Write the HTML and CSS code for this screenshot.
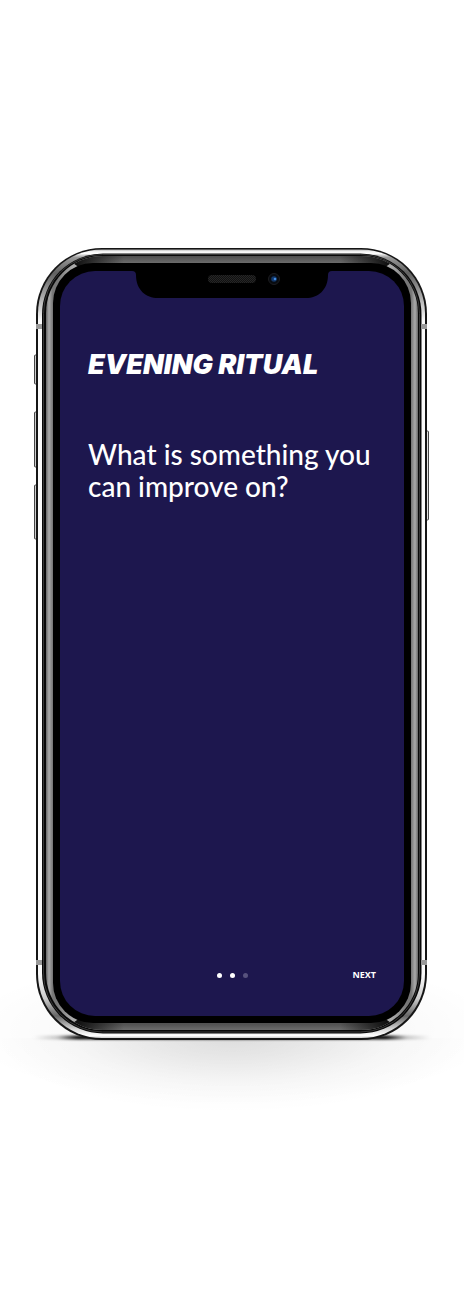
FILE: index.html
```html
<!DOCTYPE html>
<html lang="en">
<head>
<meta charset="utf-8">
<meta name="viewport" content="width=device-width, initial-scale=1">
<title>Evening Ritual</title>
<link rel="stylesheet" href="styles.css">
</head>
<body>
<div class="stage">
<div class="phone">
  <svg class="phone-frame" viewBox="36 248 392 792" aria-hidden="true">
    <defs>
      <linearGradient id="steel" x1="0" y1="0" x2="0" y2="1">
        <stop offset="0" stop-color="#aaa"/><stop offset=".002" stop-color="#eee"/><stop offset=".005" stop-color="#fff"/>
        <stop offset=".01" stop-color="#999"/><stop offset=".03" stop-color="#606060"/><stop offset=".06" stop-color="#aaa"/><stop offset=".09" stop-color="#fafafa"/>
        <stop offset=".92" stop-color="#fafafa"/><stop offset=".95" stop-color="#ccc"/><stop offset=".972" stop-color="#666"/><stop offset=".99" stop-color="#ddd"/><stop offset=".997" stop-color="#fff"/><stop offset="1" stop-color="#ccc"/>
      </linearGradient>
      <linearGradient id="bezel" x1="0" y1="0" x2="1" y2="0">
        <stop offset="0" stop-color="#666"/><stop offset=".008" stop-color="#aaa"/><stop offset=".018" stop-color="#777"/>
        <stop offset=".03" stop-color="#777"/><stop offset=".07" stop-color="#aaa"/><stop offset=".93" stop-color="#aaa"/><stop offset=".97" stop-color="#777"/>
        <stop offset=".982" stop-color="#777"/><stop offset=".992" stop-color="#aaa"/><stop offset="1" stop-color="#666"/>
      </linearGradient>
      <linearGradient id="rim-top" x1="0" y1="0" x2="0" y2="1">
        <stop offset="0" stop-color="#444"/><stop offset=".5" stop-color="#6c6c6c"/><stop offset="1" stop-color="#444"/>
      </linearGradient>
      <linearGradient id="rim-low" x1="0" y1="0" x2="0" y2="1">
        <stop offset="0" stop-color="#444"/><stop offset=".6" stop-color="#555"/><stop offset="1" stop-color="#777"/>
      </linearGradient>
      <linearGradient id="rim-ends" x1="0" y1="0" x2="1" y2="0">
        <stop offset="0" stop-color="#0a0a0a"/><stop offset=".16" stop-color="#0a0a0a" stop-opacity="0"/><stop offset=".84" stop-color="#0a0a0a" stop-opacity="0"/><stop offset="1" stop-color="#0a0a0a"/>
      </linearGradient>
      <linearGradient id="key" x1="0" y1="0" x2="1" y2="0">
        <stop offset="0" stop-color="#888"/><stop offset=".5" stop-color="#eee"/><stop offset="1" stop-color="#ccc"/>
      </linearGradient>
      <radialGradient id="floor"><stop offset="0" stop-color="#000" stop-opacity=".14"/><stop offset=".3" stop-color="#000" stop-opacity=".095"/><stop offset=".65" stop-color="#000" stop-opacity=".035"/><stop offset="1" stop-color="#000" stop-opacity="0"/></radialGradient>
      <linearGradient id="contact" x1="0" y1="0" x2="1" y2="0">
        <stop offset="0" stop-opacity="0"/><stop offset=".06" stop-opacity=".2"/><stop offset=".11" stop-opacity=".95"/><stop offset=".89" stop-opacity=".95"/><stop offset=".94" stop-opacity=".2"/><stop offset="1" stop-opacity="0"/>
      </linearGradient>
      <filter id="soft" x="-5%" y="-200%" width="110%" height="500%"><feGaussianBlur stdDeviation="2 .8"/></filter>
      <pattern id="mesh" width="2" height="2" patternUnits="userSpaceOnUse"><path fill="#111" d="M0 0h2v2H0z"/><path fill="#262626" d="M0 0h1v1H0zM1 1h1v1H1z"/></pattern>
      <clipPath id="below"><path d="M0 1038h464v90H0z"/></clipPath>
      <clipPath id="ring"><rect x="46" y="256" width="372" height="774" rx="57"/></clipPath>
    </defs>
    <ellipse cx="232" cy="1030" rx="270" ry="75" fill="url(#floor)" opacity=".55"/>
    <ellipse cx="232" cy="1038" rx="240" ry="75" fill="url(#floor)" opacity=".5" clip-path="url(#below)"/>
    <rect x="34" y="1035.500" width="396" height="4" fill="url(#contact)" filter="url(#soft)"/>
    <g fill="url(#key)" stroke="#444">
      <rect x="34.500" y="355" width="3" height="29" rx="1"/>
      <rect x="34.500" y="412" width="3" height="55" rx="1"/>
      <rect x="34.500" y="485" width="3" height="54" rx="1"/>
      <rect x="425.500" y="431" width="3" height="89" rx="1"/>
    </g>
    <rect x="36" y="248" width="391" height="792" rx="66" fill="#151515"/>
    <rect x="38" y="249.500" width="387" height="788.500" rx="64" fill="url(#steel)"/>
    <rect x="42" y="253.500" width="379.500" height="780" rx="61" fill="#080808"/>
    <rect x="43.500" y="254.500" width="376" height="777.500" rx="59" fill="none" stroke="#444" stroke-width=".8"/>
    <rect x="46" y="256" width="372" height="774" rx="57" fill="url(#bezel)"/>
    <g clip-path="url(#ring)">
      <path d="M82 254H382L391 263 378 272H86L73 263Z" fill="url(#rim-top)"/>
      <path d="M82 254H382L391 263 378 272H86L73 263Z" fill="url(#rim-ends)"/>
      <path d="M86 1014H378L391 1023 382 1032H82L73 1023Z" fill="url(#rim-low)"/>
      <path d="M86 1014H378L391 1023 382 1032H82L73 1023Z" fill="url(#rim-ends)"/>
    </g>
    <rect x="53" y="263" width="358" height="760" rx="40"/>
    <path fill="#999" d="M36 324h6v5h-6zM421 324h6v5h-6zM36 960h6v5h-6zM421 960h6v5h-6z"/>
  </svg>
  <main class="screen">
    <svg class="notch" viewBox="132 271 200 28" aria-hidden="true">
      <path d="M132 270H332V271Q328 271 328 275C328 290 318 298 306 298H158C146 298 136 290 136 275Q136 271 132 271Z"/>
      <rect x="208" y="275" width="48" height="8" rx="4" fill="url(#mesh)"/>
      <circle cx="274" cy="279" r="5.500" fill="#080b10" stroke="#1d1d20"/>
      <circle cx="274" cy="279" r="2.800" fill="#12386b"/>
      <circle cx="275" cy="279" r="1.300" fill="#438be0"/>
    </svg>
    <h1 class="title">EVENING RITUAL</h1>
    <p class="question">What is something you can improve on?</p>
    <footer class="pager">
      <div class="dots"><span class="dot"></span><span class="dot"></span><span class="dot dot-off"></span></div>
      <button class="next" type="button">NEXT</button>
    </footer>
  </main>
</div>
</div>
</body>
</html>
```
FILE: styles.css
```css
* { box-sizing: border-box; }
body { margin: 0; background: #fff; color: #fff; overflow-x: hidden; font-family: Lato, "Liberation Sans", sans-serif; }
.stage { display: flex; justify-content: center; align-items: center; min-height: 100vh; padding: 248px 36px 254px; }
.phone { position: relative; display: flex; width: 100%; max-width: 392px; aspect-ratio: 392 / 792; padding: 23px 24px 24px; }
.phone-frame { position: absolute; inset: 0; width: 100%; height: 100%; overflow: visible; }
.screen { position: relative; display: flex; flex: 1; flex-direction: column; padding: 0 28px 35px; border-radius: 35px; background: #1d174e; }
.notch { display: block; align-self: center; width: 200px; height: 28px; }
.title { margin: 49px 0 0; font: italic 900 27px/34px Inter, sans-serif; white-space: nowrap; }
.question { margin: 56px -8px 0 0; font-size: 28px; font-weight: 500; line-height: 32px; }
.pager { display: grid; grid-template-columns: 1fr auto 1fr; align-items: center; margin-top: auto; }
.dots { display: flex; grid-column: 2; gap: 8px; }
.dot { width: 5px; height: 5px; border-radius: 50%; background: #fff; }
.dot-off { background: #57527d; }
.next { justify-self: end; padding: 0; border: 0; background: none; color: #fff; font: 700 9px/12px "Noto Sans", sans-serif; }
```
